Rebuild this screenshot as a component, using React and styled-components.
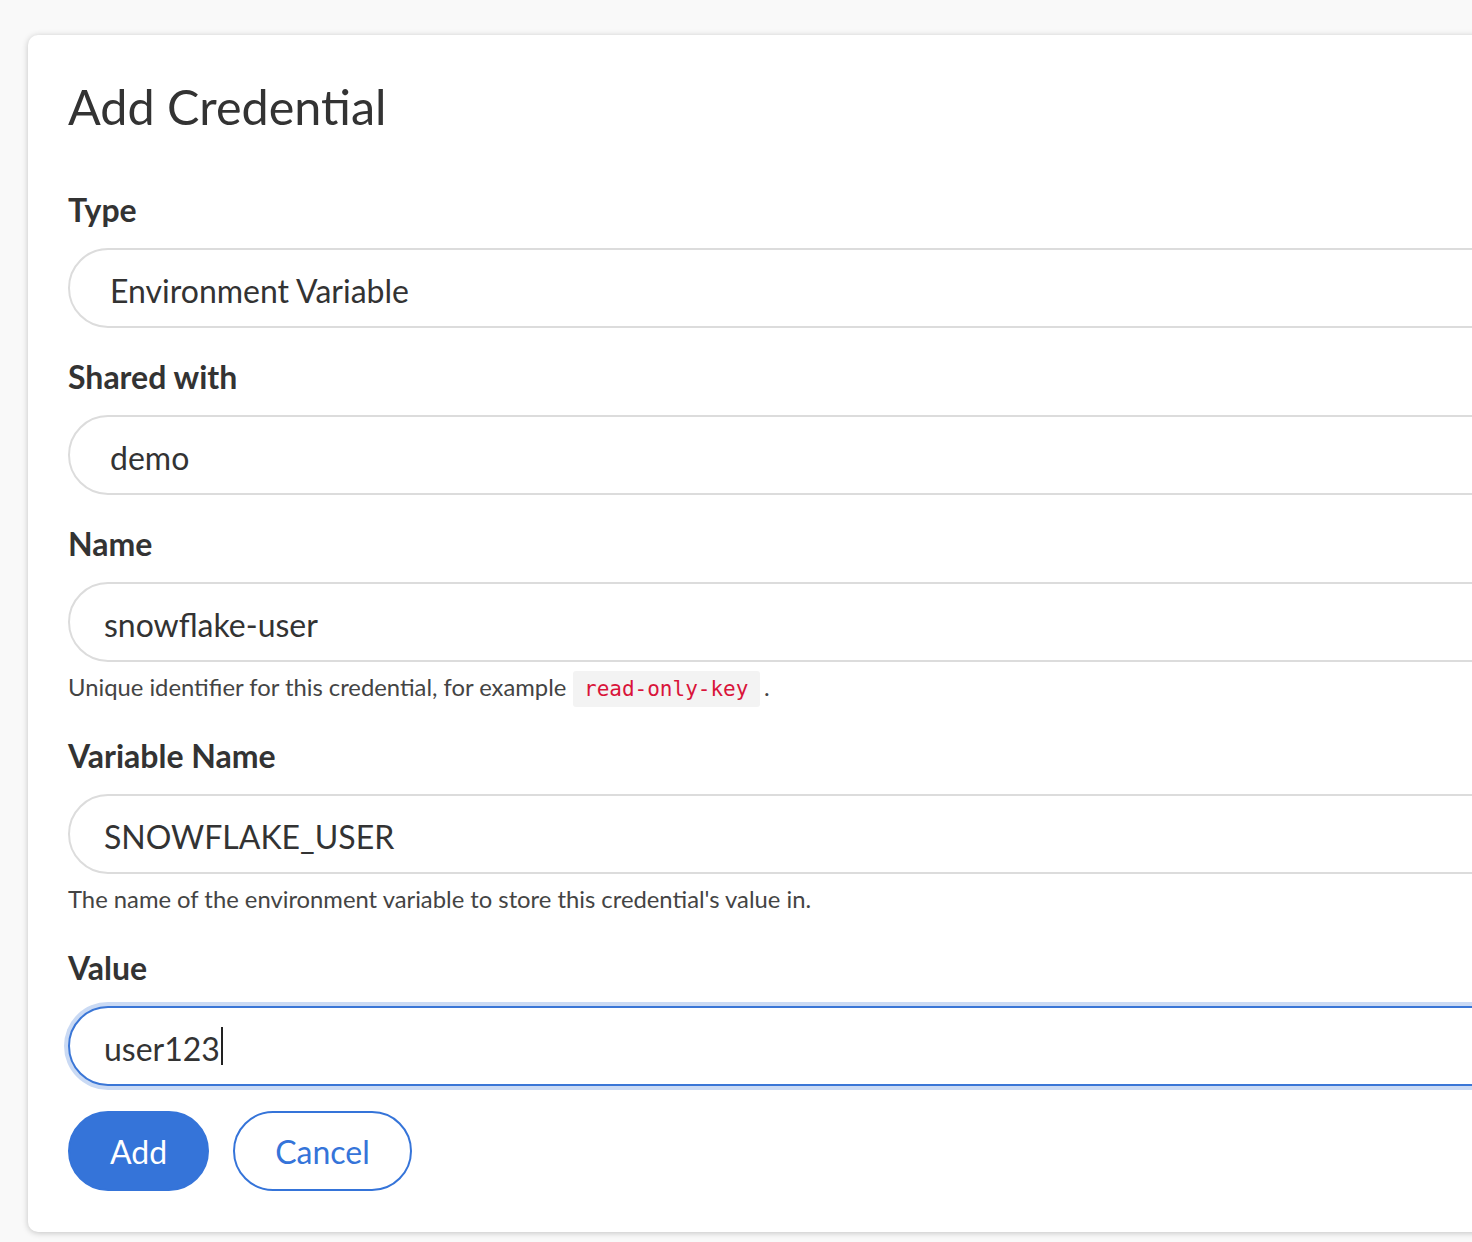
import React from "react";
import styled, { createGlobalStyle } from "styled-components";

const GlobalStyle = createGlobalStyle`
  html, body {
    margin: 0;
    padding: 0;
    background: #f9f9f9;
    overflow: hidden;
  }
  body {
    font-family: Lato, "Open Sans", sans-serif;
    color: #333;
  }
`;

export default function App() {
  const fields = [
    { label: "Type", value: "Environment Variable", select: true },
    { label: "Shared with", value: "demo", select: true },
    {
      label: "Name",
      value: "snowflake-user",
      help: (
        <>
          Unique identifier for this credential, for example{" "}
          <Code>read-only-key</Code>.
        </>
      ),
    },
    {
      label: "Variable Name",
      value: "SNOWFLAKE_USER",
      help: "The name of the environment variable to store this credential's value in.",
    },
    { label: "Value", value: "user123", focused: true },
  ];

  return (
    <>
      <GlobalStyle />
      <Page>
        <Card>
          <Title>Add Credential</Title>
          {fields.map((f) => (
            <Group key={f.label}>
              <Label>{f.label}</Label>
              <Field $select={f.select} $focused={f.focused}>
                {f.value}
                {f.focused && <Caret />}
              </Field>
              {f.help && <Help>{f.help}</Help>}
            </Group>
          ))}
          <Actions>
            <Button $primary>Add</Button>
            <Button>Cancel</Button>
          </Actions>
        </Card>
      </Page>
    </>
  );
}

const Page = styled.div`
  padding: 35px 0 10px 28px;
  width: 1700px;
`;

const Card = styled.div`
  background: #fff;
  border-radius: 10px;
  box-shadow: 0 1px 6px rgba(0, 0, 0, 0.22);
  padding: 42px 40px 41px 40px;
  width: 1600px;
`;

const Title = styled.h1`
  margin: 0 0 57px;
  font-size: 48.5px;
  font-weight: 400;
  line-height: 1.2;
  color: #333;
`;

const Group = styled.div`
  margin-top: 31px;
  &:first-of-type {
    margin-top: 0;
  }
`;

const Label = styled.div`
  font-size: 32px;
  font-weight: 700;
  line-height: 36px;
  color: #333;
  margin-bottom: 20px;
`;

const Field = styled.div`
  box-sizing: border-box;
  display: flex;
  align-items: center;
  height: 80px;
  border-radius: 40px;
  border: 2px solid ${(p) => (p.$focused ? "#3a76d6" : "#dcdcdc")};
  box-shadow: ${(p) => (p.$focused ? "0 0 0 4px #cadaf4" : "none")};
  padding-top: 4px;
  padding-left: ${(p) => (p.$select ? "40px" : "34px")};
  font-size: 32px;
  color: #333;
  background: #fff;
`;

const Caret = styled.span`
  display: inline-block;
  width: 2px;
  height: 38px;
  background: #222;
  margin-left: 1px;
  margin-top: -4px;
`;

const Help = styled.div`
  margin-top: 5px;
  font-size: 23.8px;
  line-height: 40px;
  color: #444;
`;

const Code = styled.code`
  font-family: "DejaVu Sans Mono", "Liberation Mono", monospace;
  font-size: 21px;
  line-height: 1;
  color: #d9143a;
  background: #f3f3f3;
  padding: 6px 11.5px;
  border-radius: 3px;
  margin-right: 4px;
`;

const Actions = styled.div`
  display: flex;
  gap: 24px;
  margin-top: 25px;
`;

const Button = styled.button`
  box-sizing: border-box;
  height: 80px;
  padding: 0 40px;
  border-radius: 40px;
  border: 2px solid #3574d9;
  background: ${(p) => (p.$primary ? "#3574d9" : "#fff")};
  color: ${(p) => (p.$primary ? "#fff" : "#3574d9")};
  font-family: Lato, sans-serif;
  font-size: 32px;
  cursor: pointer;
`;
